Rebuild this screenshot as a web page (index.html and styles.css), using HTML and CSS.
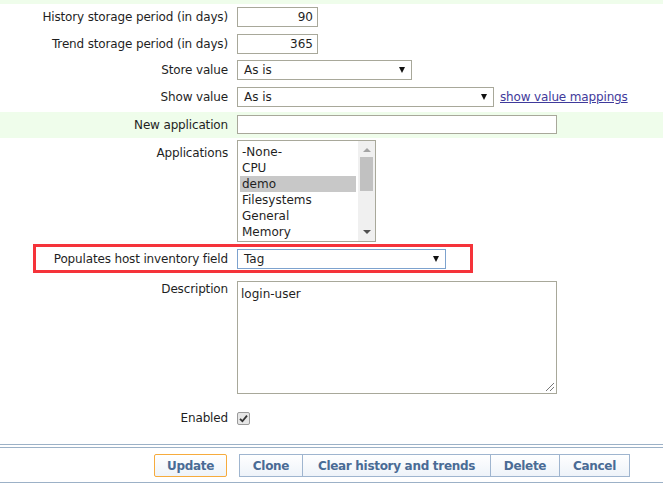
FILE: index.html
```html
<!DOCTYPE html>
<html>
<head>
<meta charset="utf-8">
<link rel="stylesheet" href="styles.css">
</head>
<body>
<div class="strip"></div>
<div class="form">
  <div class="row r1">
    <div class="label">History storage period (in days)</div>
    <div class="field"><div class="input num">90</div></div>
  </div>
  <div class="row r2">
    <div class="label">Trend storage period (in days)</div>
    <div class="field"><div class="input num">365</div></div>
  </div>
  <div class="row r3">
    <div class="label">Store value</div>
    <div class="field"><div class="select w175"><span>As is</span><i class="arrow"></i></div></div>
  </div>
  <div class="row r4">
    <div class="label">Show value</div>
    <div class="field"><div class="select w257"><span>As is</span><i class="arrow"></i></div><a class="link" href="#">show value mappings</a></div>
  </div>
  <div class="row r5 green">
    <div class="label">New application</div>
    <div class="field"><div class="input wide"></div></div>
  </div>
  <div class="row r6">
    <div class="label">Applications</div>
    <div class="field">
      <div class="listbox">
        <div class="items">
          <div class="item">-None-</div>
          <div class="item">CPU</div>
          <div class="item sel">demo</div>
          <div class="item">Filesystems</div>
          <div class="item">General</div>
          <div class="item">Memory</div>
        </div>
        <div class="scrollbar">
          <i class="up"></i>
          <div class="thumb"></div>
          <i class="down"></i>
        </div>
      </div>
    </div>
  </div>
  <div class="row r7 marked">
    <div class="label">Populates host inventory field</div>
    <div class="field"><div class="select w209 focus"><span>Tag</span><i class="arrow"></i></div></div>
  </div>
  <div class="row r8">
    <div class="label">Description</div>
    <div class="field"><div class="textarea">login-user<i class="grip"></i></div></div>
  </div>
  <div class="row r9">
    <div class="label">Enabled</div>
    <div class="field"><span class="check"><svg width="9" height="9" viewBox="0 0 9 9"><path d="M1 4.8 L3.4 7.2 L8 1.6" fill="none" stroke="#333" stroke-width="1.8"/></svg></span></div>
  </div>
</div>
<div class="footer">
  <div class="footer-inner">
    <button class="btn update">Update</button>
    <div class="group">
      <button class="btn b-clone">Clone</button>
      <button class="btn b-clear">Clear history and trends</button>
      <button class="btn b-delete">Delete</button>
      <button class="btn b-cancel">Cancel</button>
    </div>
  </div>
</div>
</body>
</html>
```
FILE: styles.css
```css
html, body {
  margin: 0;
  padding: 0;
  background: #ffffff;
  font-family: "DejaVu Sans", Verdana, sans-serif;
  font-size: 12px;
  color: #1f1f1f;
}
.strip {
  height: 4px;
  background: #effdeb;
}
.row {
  display: grid;
  grid-template-columns: 228px 1fr;
  column-gap: 9px;
  align-items: center;
  position: relative;
}
.label {
  text-align: right;
  white-space: nowrap;
  letter-spacing: -0.15px;
}
.field {
  display: flex;
  align-items: center;
  gap: 6px;
}
.r1 { padding: 3px 0 4px; }
.r2 { padding: 3px 0 3px; }
.r3 { padding: 3px 0 4px; }
.r4 { padding: 3px 0 3px; }
.r5 { margin-top: 2px; padding: 3px 0 4px; }
.r6 { padding: 2px 0 2px; align-items: start; }
.r6 .label { padding-top: 6px; }
.r7 { padding: 5px 0 4px; }
.r8 { padding: 8px 0 0; align-items: start; }
.r8 .label { padding-top: 1px; }
.r9 { padding: 17px 0 0; }
.green { background: #effdeb; }
.input {
  box-sizing: border-box;
  height: 20px;
  border: 1px solid #a8a89a;
  background: #fff;
  line-height: 18px;
  padding: 0 4px;
}
.input.num {
  width: 81px;
  text-align: right;
}
.input.wide {
  width: 320px;
  height: 19px;
}
.select {
  box-sizing: border-box;
  height: 20px;
  border: 1px solid #a8a89a;
  background: #fff;
  display: flex;
  align-items: center;
  justify-content: space-between;
  padding: 0 6px 0 6px;
}
.select.focus { border-color: #7da2ce; }
.w175 { width: 175px; }
.w257 { width: 257px; }
.w209 { width: 209px; }
.arrow {
  width: 0;
  height: 0;
  border-left: 3.5px solid transparent;
  border-right: 3.5px solid transparent;
  border-top: 6px solid #111;
}
.link {
  color: #3f3a9b;
  text-decoration: underline;
  letter-spacing: -0.15px;
}
.listbox {
  box-sizing: border-box;
  width: 139px;
  height: 102px;
  border: 1px solid #a8a89a;
  display: flex;
  background: #fff;
}
.items {
  flex: 1;
  padding: 3px 2px 0 2px;
}
.item {
  height: 16px;
  line-height: 16px;
  padding-left: 2px;
}
.item.sel { background: #c8c8c8; }
.scrollbar {
  width: 17px;
  background: #f0f0f0;
  position: relative;
  display: flex;
  flex-direction: column;
  align-items: center;
}
.scrollbar .up {
  margin-top: 7px;
  width: 0; height: 0;
  border-left: 4px solid transparent;
  border-right: 4px solid transparent;
  border-bottom: 4px solid #a3a3a3;
}
.scrollbar .thumb {
  margin-top: 5px;
  width: 13px;
  height: 34px;
  background: #c1c1c1;
}
.scrollbar .down {
  margin-top: auto;
  margin-bottom: 7px;
  width: 0; height: 0;
  border-left: 4px solid transparent;
  border-right: 4px solid transparent;
  border-top: 4px solid #505050;
}
.marked::after {
  content: "";
  position: absolute;
  left: 33px;
  top: 0;
  width: 440px;
  height: 29px;
  box-sizing: border-box;
  border: 3px solid #f5333a;
  pointer-events: none;
}
.textarea {
  box-sizing: border-box;
  width: 320px;
  height: 113px;
  border: 1px solid #a8a89a;
  padding: 5px 3px;
  position: relative;
}
.grip {
  position: absolute;
  right: 2px;
  bottom: 2px;
  width: 8px;
  height: 8px;
  background: linear-gradient(135deg, transparent 45%, #777 45%, #777 55%, transparent 55%, transparent 70%, #777 70%, #777 80%, transparent 80%);
}
.check {
  box-sizing: border-box;
  width: 13px;
  height: 13px;
  border: 1px solid #9a9a9a;
  border-radius: 2px;
  background: #e6e6e6;
  display: flex;
  align-items: center;
  justify-content: center;
}
.footer {
  margin-top: 19px;
  border-top: 1px solid #9cb1c7;
  padding-top: 2px;
}
.footer-inner {
  border-top: 1px solid #9cb1c7;
  border-bottom: 1px solid #9cb1c7;
  display: flex;
  justify-content: flex-end;
  padding: 6px 33px 5px 0;
  gap: 12px;
}
.group { display: flex; }
.btn {
  box-sizing: border-box;
  height: 23px;
  border: 1px solid #9fb5cf;
  border-radius: 2px;
  background: linear-gradient(#ffffff, #eef3f9);
  color: #4a6b95;
  font-family: "DejaVu Sans", Verdana, sans-serif;
  font-weight: bold;
  font-size: 12px;
  letter-spacing: -0.3px;
  padding: 0;
  margin: 0;
  text-align: center;
}
.group .btn { border-radius: 0; }
.group .btn + .btn { border-left: none; }
.btn.update {
  border-color: #f6ab3d;
  width: 73px;
}
.b-clone { width: 64px; }
.b-clear { width: 188px; }
.b-delete { width: 69px; }
.b-cancel { width: 70px; }
```
